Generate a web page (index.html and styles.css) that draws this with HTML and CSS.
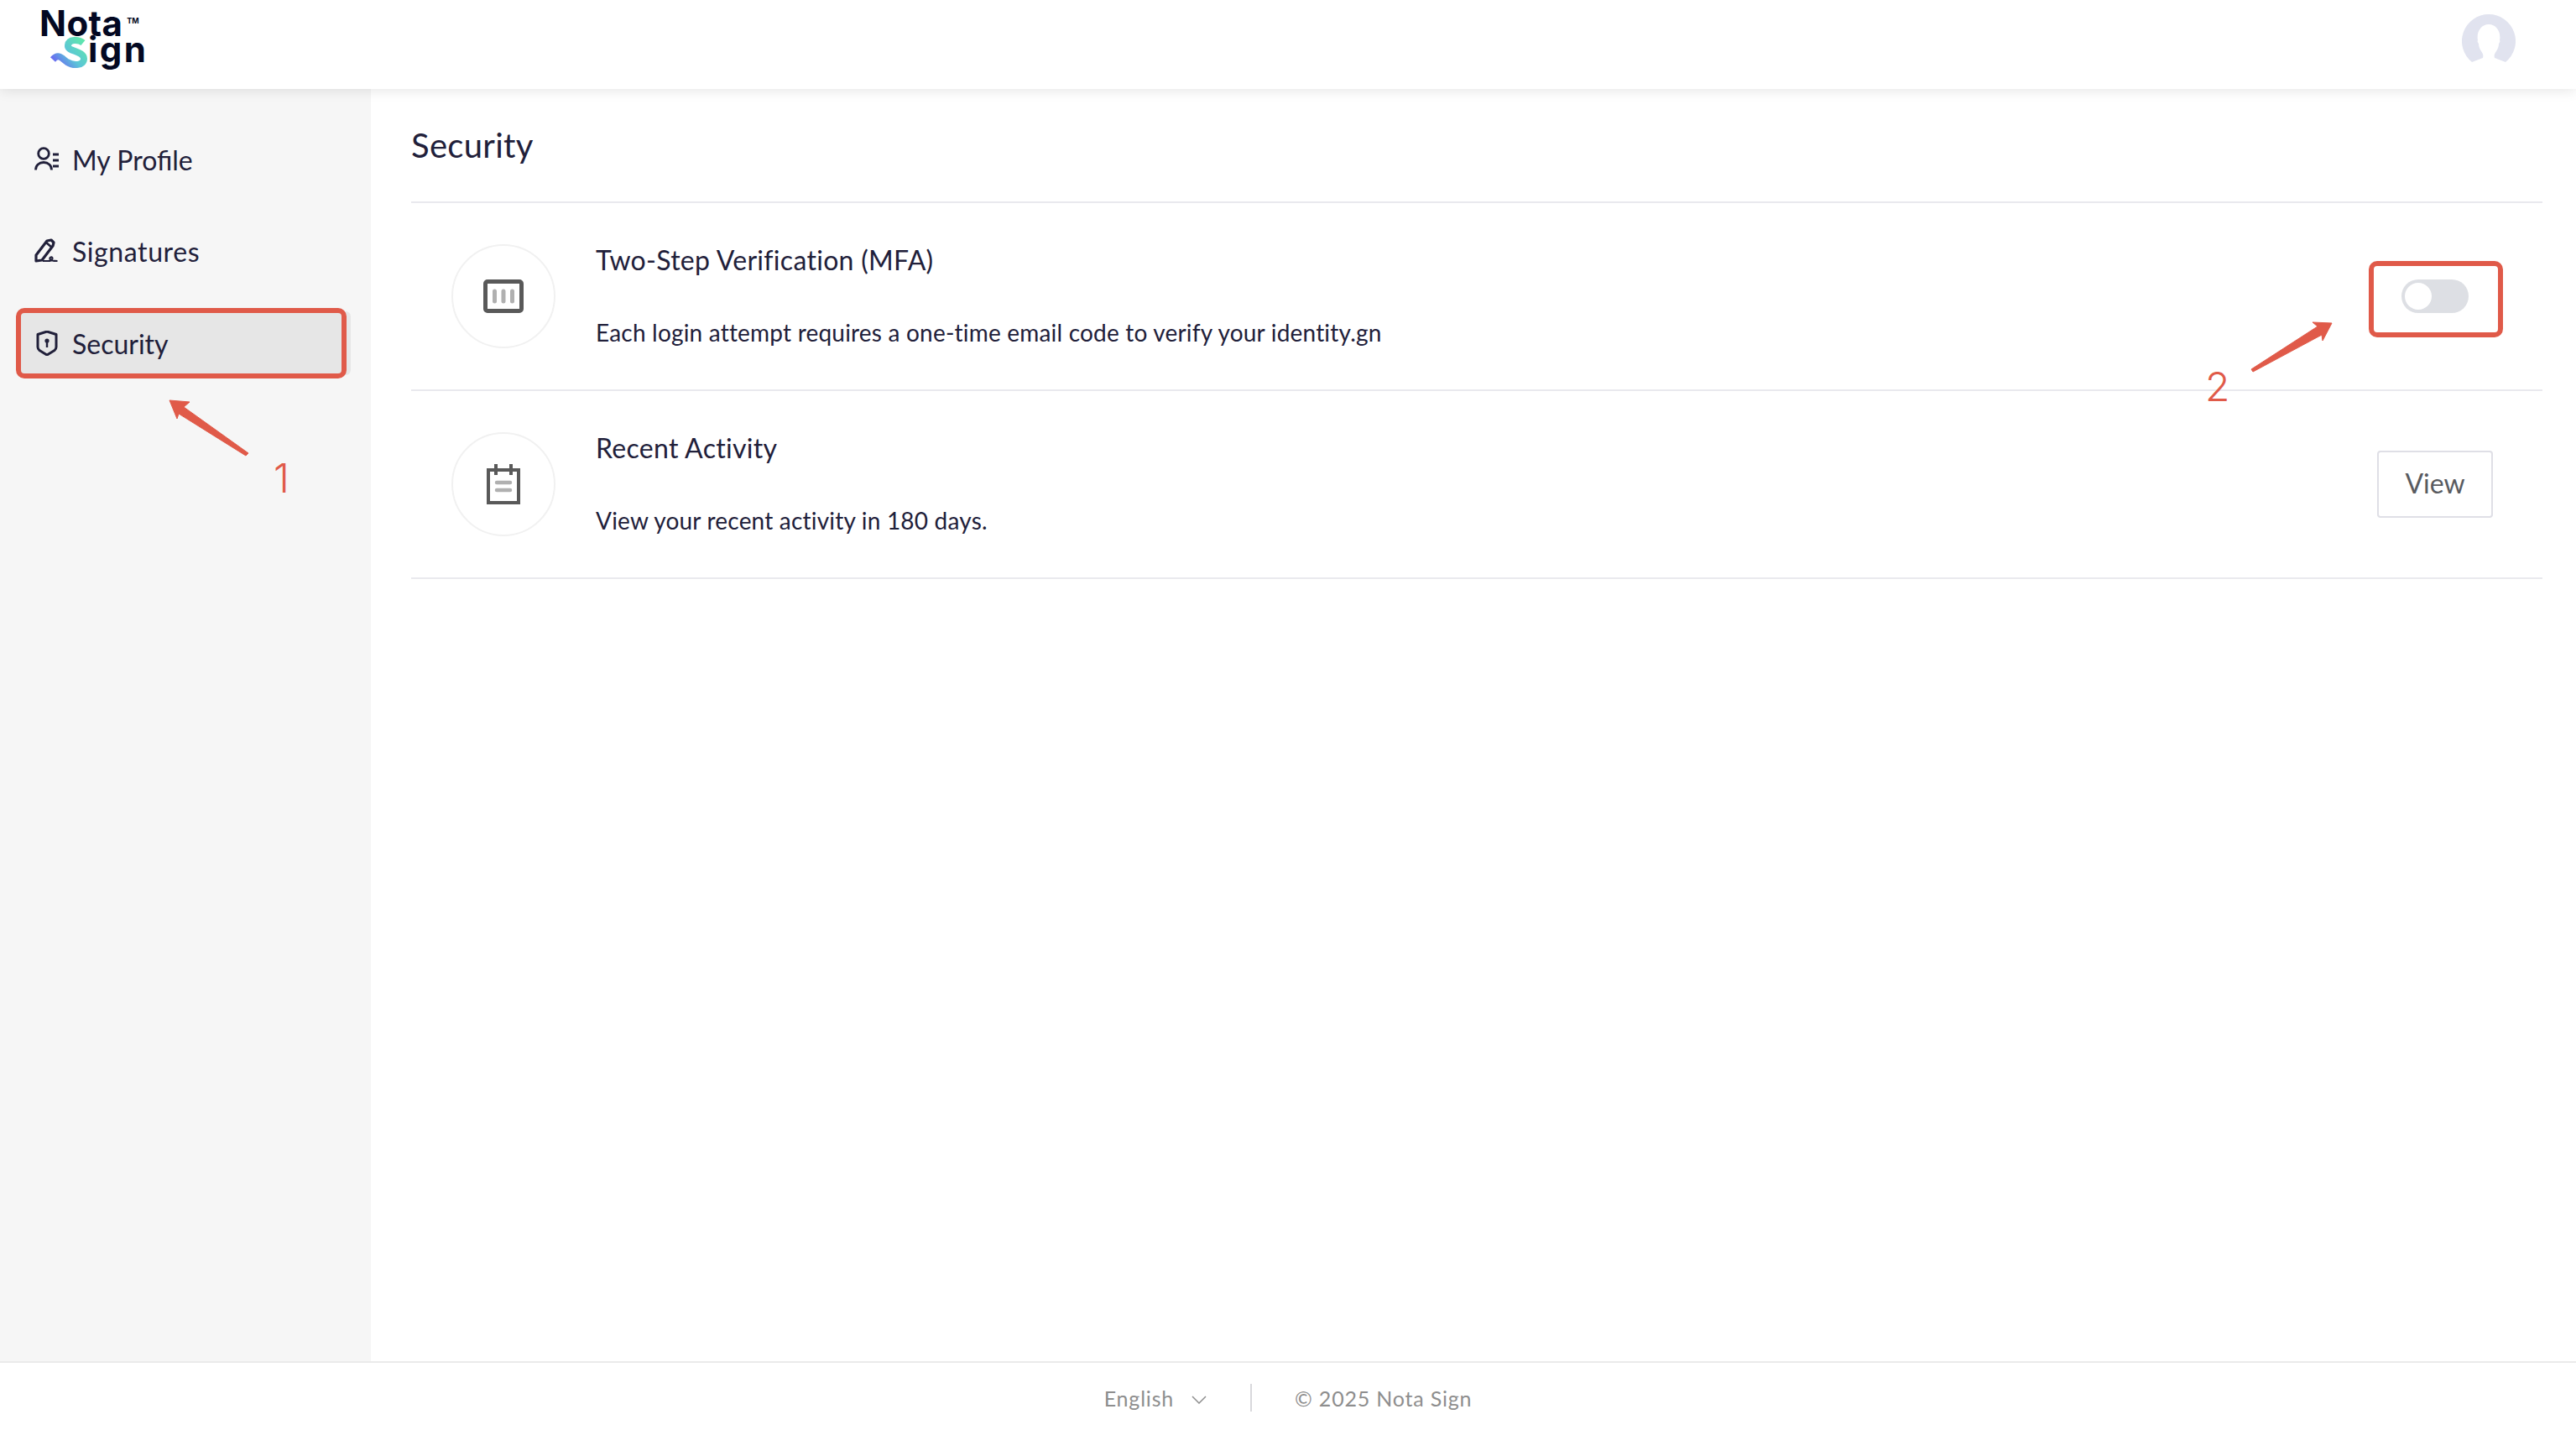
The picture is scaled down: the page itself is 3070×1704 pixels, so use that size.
FILE: index.html
```html
<!DOCTYPE html>
<html lang="en">
<head>
<meta charset="utf-8">
<title>Security - Nota Sign</title>
<link rel="stylesheet" href="styles.css">
</head>
<body>
<div class="app">
  <header class="topbar">
    <div class="logo">
      <div class="logo-line logo-nota">Nota<span class="logo-tm">TM</span></div>
      <div class="logo-line">
        <svg class="logo-s" viewBox="48 43 56 31" aria-hidden="true">
          <defs>
            <linearGradient id="sg" gradientUnits="userSpaceOnUse" x1="96" y1="46" x2="62" y2="76">
              <stop offset="0" stop-color="#5fe6ae"/>
              <stop offset=".5" stop-color="#5bc4d8"/>
              <stop offset="1" stop-color="#6c58f6"/>
            </linearGradient>
          </defs>
          <path d="M99 51C94 47 82 46 81 54C80 62 100 60 100 70C100 78 88 79 80 74C74 70 70 63 63 71" fill="none" stroke="url(#sg)" stroke-width="8"/>
        </svg><span class="logo-ign">ign</span>
      </div>
    </div>
    <svg class="avatar" viewBox="0 0 64 60" aria-hidden="true">
      <path d="M32 0a32 32 0 0 1 20 57l-13-5c-1-3 0-5 2-8 2-3 3-6 3-9 1-1 2-3 1-4 2-10-4-19-13-19s-15 9-13 19c-1 1 0 3 1 4 0 3 1 6 3 9 2 3 3 5 2 8l-13 5A32 32 0 0 1 32 0z" fill="#e1e3ef"/>
    </svg>
  </header>

  <div class="body-row">
    <aside class="sidebar">
      <a class="nav-item">
        <svg class="nav-icon" viewBox="0 0 30 30" aria-hidden="true">
          <circle cx="11" cy="8" r="6.3" fill="none" stroke="#21203a" stroke-width="2.8"/>
          <path d="M1.500 27.500c0-5.500 4-9 9.500-9s9.500 3.500 9.500 9" fill="none" stroke="#21203a" stroke-width="2.800"/>
          <path d="M22 9h7M22 16h7M22 23h7" stroke="#21203a" stroke-width="2.800"/>
        </svg>
        <span>My Profile</span>
      </a>
      <a class="nav-item nav-sign">
        <svg class="nav-icon" viewBox="0 0 30 30" aria-hidden="true">
          <path d="M2 27V20L15 3l5-1 3 3-1 4L9 26z" fill="none" stroke="#21203a" stroke-width="3.200" stroke-linejoin="round"/>
          <path d="M14 5l7 6" stroke="#21203a" stroke-width="2.600"/>
          <path d="M10 27h6c3 0 6-1 5.500-3.500-.5-2-3.500-1-3 1 .5 2.500 5 2.500 9 2.500" fill="none" stroke="#21203a" stroke-width="2.200"/>
        </svg>
        <span>Signatures</span>
      </a>
      <a class="nav-item is-active">
        <svg class="nav-icon" viewBox="0 0 30 30" aria-hidden="true">
          <path d="M15 1l11 3.500v15c0 2-1 3-2 4L15 29l-9-5.500c-1-1-2-2-2-4v-15z" fill="none" stroke="#21203a" stroke-width="3" stroke-linejoin="round"/>
          <circle cx="15" cy="12" r="2.600" fill="#21203a"/>
          <path d="M15 12v8" stroke="#21203a" stroke-width="2.400"/>
        </svg>
        <span>Security</span>
      </a>
    </aside>

    <main class="content">
      <h1 class="page-title">Security</h1>

      <section class="row">
        <div class="row-circle">
          <svg class="icon-mfa" viewBox="0 0 48 40" aria-hidden="true">
            <rect x="2.500" y="2.500" width="43" height="35" rx="2.500" fill="none" stroke="#595959" stroke-width="5"/>
            <path d="M13.500 14v12M24 14v12M34.500 14v12" stroke="#b0b0b0" stroke-width="5" stroke-linecap="round"/>
          </svg>
        </div>
        <div class="row-text">
          <div class="row-title">Two-Step Verification (MFA)</div>
          <div class="row-desc">Each login attempt requires a one-time email code to verify your identity.gn</div>
        </div>
        <div class="row-action">
          <span class="toggle"><span class="toggle-knob"></span></span>
        </div>
      </section>

      <section class="row">
        <div class="row-circle">
          <svg class="icon-cal" viewBox="0 0 40 48" aria-hidden="true">
            <rect x="2" y="7" width="36" height="39" fill="none" stroke="#595959" stroke-width="4"/>
            <path d="M11 0v13M29 0v13" stroke="#595959" stroke-width="4"/>
            <path d="M12 22h16M12 31h16" stroke="#b0b0b0" stroke-width="4.500" stroke-linecap="round"/>
          </svg>
        </div>
        <div class="row-text">
          <div class="row-title">Recent Activity</div>
          <div class="row-desc">View your recent activity in 180 days.</div>
        </div>
        <div class="row-action">
          <button class="btn-view" type="button">View</button>
        </div>
      </section>
    </main>
  </div>

  <footer class="footer">
    <span class="lang">English
      <svg class="chev" viewBox="0 0 18 10" aria-hidden="true"><path d="M1 1l8 8 8-8" fill="none" stroke="#8e8e8e" stroke-width="1.500"/></svg>
    </span>
    <span class="foot-sep"></span>
    <span class="copy">© 2025 Nota Sign</span>
  </footer>
</div>

<div class="mark mark-nav"></div>
<div class="mark mark-toggle"></div>
<svg class="arrows" viewBox="0 0 3070 1704" aria-hidden="true">
  <path d="M202 477L226 479L219 485L296 540L293 543L213 493L211 499Z" fill="#e05a49" stroke="#e05a49" stroke-linejoin="round"/>
  <path d="M2779 385L2756 384L2762 389L2683 440L2685 443L2767 399L2768 406Z" fill="#e05a49" stroke="#e05a49" stroke-linejoin="round"/>
</svg>
<span class="mark-num num-1">1</span>
<span class="mark-num num-2">2</span>
</body>
</html>
```
FILE: styles.css
```css
* { box-sizing: border-box; }
html, body { margin: 0; height: 100%; }
body {
  position: relative;
  font-family: "Lato", "Noto Sans", sans-serif;
  color: #21203a;
  background: #fff;
  overflow: hidden;
}
.app { display: flex; flex-direction: column; height: 1704px; }

.topbar {
  position: relative;
  z-index: 2;
  flex: 0 0 106px;
  display: flex;
  justify-content: space-between;
  background: #fff;
  padding: 12px 72px 0 47px;
  box-shadow: 0 2px 14px rgba(0, 0, 0, .1);
}
.logo { color: #030822; font-family: "Inter", sans-serif; font-weight: 700; font-size: 42px; line-height: 31px; }
.logo-line { display: flex; height: 31px; }
.logo-nota { letter-spacing: .4px; }
.logo-ign { letter-spacing: 2.4px; margin-left: 1px; }
.logo-tm { font-size: 9px; line-height: 9px; font-weight: 700; letter-spacing: 0; margin: 8px 0 0 5px; }
.logo-s { width: 56px; height: 31px; margin-left: 1px; overflow: visible; flex: none; }
.avatar { width: 64px; height: 60px; margin-top: 5px; }

.body-row { flex: 1; display: flex; min-height: 0; }
.sidebar {
  flex: 0 0 442px;
  background: #f6f6f6;
  padding: 46px 24px 0 20px;
  display: flex;
  flex-direction: column;
  gap: 33px;
}
.nav-item {
  display: flex;
  align-items: center;
  height: 76px;
  padding-left: 21px;
  border-radius: 6px;
  font-size: 32px;
}
.nav-sign { letter-spacing: .6px; }
.nav-item.is-active { background: #e6e6e6; margin-top: 1px; }
.nav-icon { width: 30px; height: 30px; margin-right: 15px; flex: none; }

.content { flex: 1; padding: 0 40px 0 48px; }
.page-title {
  margin: 0;
  height: 136px;
  display: flex;
  align-items: center;
  font-size: 40px;
  font-weight: 400;
  letter-spacing: .3px;
  border-bottom: 2px solid #e9e9ee;
}
.row {
  display: flex;
  align-items: center;
  height: 224px;
  padding-left: 48px;
  border-bottom: 2px solid #e9e9ee;
}
.row-circle {
  flex: none;
  width: 124px;
  height: 124px;
  border: 2px solid #f1f1f1;
  border-radius: 50%;
  display: flex;
  align-items: center;
  justify-content: center;
}
.icon-mfa { width: 48px; height: 40px; }
.icon-cal { width: 40px; height: 48px; }
.row-text { flex: 1; margin-left: 48px; display: flex; flex-direction: column; gap: 42px; }
.row-title { font-size: 32px; line-height: 44px; letter-spacing: .3px; }
.row-desc { font-size: 28px; line-height: 44px; letter-spacing: .2px; }
.row-action { flex: 0 0 138px; margin-right: 59px; display: flex; justify-content: center; }

.toggle { display: block; width: 80px; height: 40px; border-radius: 20px; background: #dddfe4; padding: 4px; }
.toggle-knob { display: block; width: 32px; height: 32px; border-radius: 50%; background: #fff; }
.btn-view {
  width: 138px;
  height: 80px;
  padding: 0 0 3px;
  border: 2px solid #dfdfe6;
  border-radius: 4px;
  background: #fff;
  color: #595b60;
  font-family: inherit;
  font-size: 32px;
}

.footer {
  flex: 0 0 82px;
  padding-top: 3px;
  border-top: 2px solid #ebebeb;
  display: flex;
  align-items: center;
  justify-content: center;
  color: #8e8e8e;
  font-size: 25px;
  letter-spacing: .8px;
}
.lang { display: flex; align-items: center; }
.chev { width: 18px; height: 10px; margin-left: 21px; margin-top: 4px; }
.foot-sep { width: 2px; height: 33px; background: #d8d8dc; margin: 0 51px 0 52px; }

.mark { position: absolute; border: 6px solid #e05a49; border-radius: 10px; }
.mark-nav { left: 19px; top: 367px; width: 394px; height: 84px; }
.mark-toggle { left: 2823px; top: 311px; width: 160px; height: 91px; }
.arrows { position: absolute; left: 0; top: 0; width: 3070px; height: 1704px; pointer-events: none; }
.mark-num { position: absolute; color: #e05a49; font-family: "Inter", sans-serif; font-weight: 300; font-size: 48px; line-height: 48px; }
.num-1 { left: 326px; top: 546px; }
.num-2 { left: 2628px; top: 437px; }
```
